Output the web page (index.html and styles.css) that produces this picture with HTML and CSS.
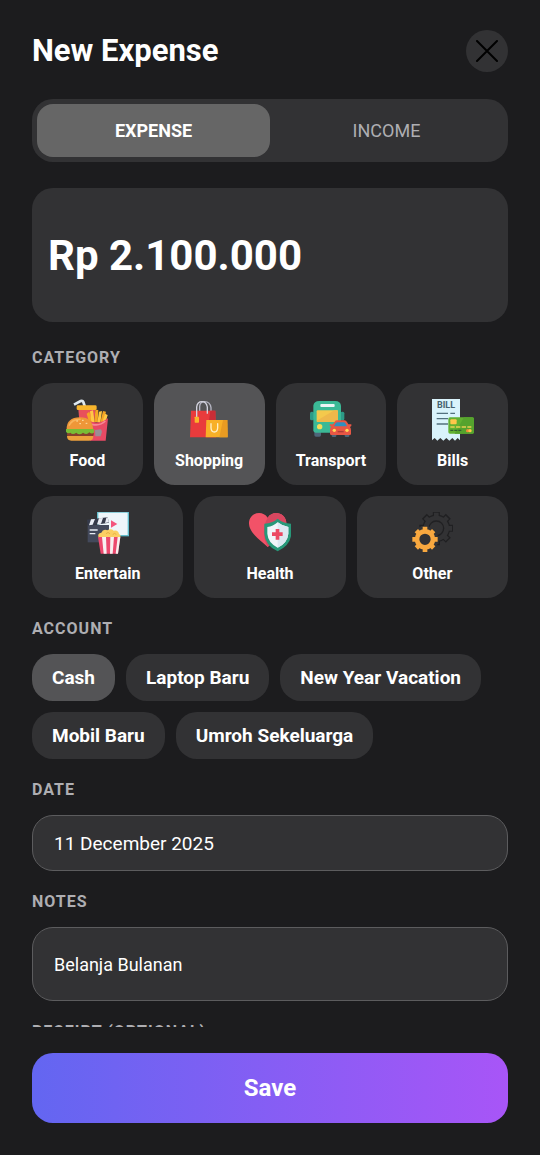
FILE: index.html
```html
<!DOCTYPE html>
<html lang="en">
<head>
  <meta charset="UTF-8" />
  <meta name="viewport" content="width=device-width, initial-scale=1.0"/>
  <title>New Expense</title>
  <link rel="stylesheet" href="styles.css">
</head>
<body>
  <form class="screen">
    <header class="header">
      <h1>New Expense</h1>
      <button type="button" class="close-btn" aria-label="Close">
        <svg width="22" height="22" viewBox="0 0 22 22" fill="none" stroke="#000" stroke-width="2" stroke-linecap="round">
          <path d="M1 1 L21 21 M21 1 L1 21"/>
        </svg>
      </button>
    </header>

    <main class="content">
      <!-- Expense / Income switch -->
      <div class="tabs">
        <button type="button" class="tab active">EXPENSE</button>
        <button type="button" class="tab">INCOME</button>
      </div>

      <input type="text" class="amount" value="Rp 2.100.000" aria-label="Amount" />

      <!-- Category -->
      <section>
        <h2 class="label">CATEGORY</h2>
        <div class="categories">
          <button type="button" class="category">
            <svg class="icon" viewBox="0 0 126 126">
              <path d="M24 17 L44 6 Q50 4 52 9 L57 24" fill="none" stroke="#dfe9f0" stroke-width="8"/>
              <path d="M37 30 H88 L84 90 H42 Z" fill="#e8505b"/>
              <rect x="32" y="19" width="60" height="14" rx="4" fill="#f7b52c"/>
              <path d="M62 44 L70 38 L78 66 L70 72 Z" fill="#f5a623"/>
              <path d="M72 37 L81 34 L86 70 L76 70 Z" fill="#ffc845"/>
              <path d="M88 32 L97 33 L95 70 L85 70 Z" fill="#f5a623"/>
              <path d="M99 38 L108 36 L103 72 L94 70 Z" fill="#ffc845"/>
              <path d="M111 36 L120 38 L112 72 L103 70 Z" fill="#f5a623"/>
              <path d="M117 44 L125 48 L118 72 L109 70 Z" fill="#ffc845"/>
              <path d="M66 64 Q96 80 126 58 L119 125 H72 Z" fill="#e84a64"/>
              <path d="M78 76 Q102 82 118 66" fill="none" stroke="#f58a96" stroke-width="5"/>
              <path d="M87 93 L105 91 L108 98 L104 112 L88 112 Z" fill="#9a8d95"/>
              <path d="M2 91 Q1 56 42 55 Q81 56 81 91 Z" fill="#ee9738"/>
              <path d="M10 78 Q18 61 42 61" fill="none" stroke="#f9b45a" stroke-width="5" stroke-linecap="round"/>
              <path d="M31 66 h5 M48 64 h5 M40 74 h5 M59 73 h5" stroke="#ffe0a6" stroke-width="3"/>
              <rect x="3" y="98" width="80" height="14" rx="5" fill="#87402c"/>
              <path d="M0 90 H84 L85 99 Q78 108 70 100 Q62 110 51 101 Q40 110 31 101 Q20 109 13 101 Q5 106 0 98 Z" fill="#79bd35"/>
              <path d="M3 111 H82 Q82 125 70 125 H16 Q3 125 3 111 Z" fill="#eda03c"/>
            </svg>
            Food
          </button>
          <button type="button" class="category active">
            <svg class="icon" viewBox="0 0 126 126">
              <path d="M35 45 V22 Q36 8 50 8 Q66 8 69 26 V45" fill="none" stroke="#b5b5c2" stroke-width="4"/>
              <path d="M9 35 H82 L84 115 H6 Z" fill="#e93b3c"/>
              <path d="M67 35 H82 L84 115 H56 Z" fill="#c92d36"/>
              <path d="M26 54 V24 Q28 8 42 8 Q55 8 58 24 V44" fill="none" stroke="#d4d4df" stroke-width="4"/>
              <rect x="20" y="53" width="13" height="18" rx="2" fill="#fbb52b"/>
              <path d="M55 63 H118 L119 115 H53 Z" fill="#f8b026"/>
              <path d="M105 63 H118 L119 115 H94 Z" fill="#e89b22"/>
              <path d="M69 74 V87 Q70 99 79 99 Q88 99 89 87 V74" fill="none" stroke="#fff0c6" stroke-width="4" stroke-linecap="round"/>
            </svg>
            Shopping
          </button>
          <button type="button" class="category">
            <svg class="icon" viewBox="0 0 126 126">
              <rect x="0" y="38" width="12" height="26" rx="5" fill="#2d9a87"/>
              <rect x="91" y="38" width="12" height="26" rx="5" fill="#2d9a87"/>
              <rect x="13" y="92" width="20" height="21" rx="5" fill="#4e667a"/>
              <path d="M10 20 Q12 6 28 6 H76 Q91 6 93 20 V94 Q93 101 86 101 H17 Q10 101 10 94 Z" fill="#3bb996"/>
              <rect x="31" y="15" width="43" height="9" rx="3" fill="#eef5f5"/>
              <rect x="20" y="34" width="64" height="35" rx="3" fill="#f4c94c"/>
              <path d="M20 65 L73 34 H81 Q84 34 84 38 V69 H24 Q20 69 20 65 Z" fill="#eeb84b"/>
              <circle cx="29" cy="83" r="8" fill="#f8dc58"/>
              <rect x="65" y="97" width="14" height="17" rx="4" fill="#4e667a"/>
              <rect x="104" y="97" width="14" height="17" rx="4" fill="#4e667a"/>
              <path d="M59 76 h10 L74 68 Q76 64 82 64 H103 Q109 64 111 69 L115 76 H124 V81 L120 84 Q123 88 123 94 V105 Q123 108 119 108 H64 Q60 108 60 104 V91 Q60 86 64 83 L59 80 Z" fill="#e85745"/>
              <path d="M72 82 L77 73 Q79 70 83 70 H101 Q105 70 107 74 L111 82 Z" fill="#308fc0"/>
              <circle cx="73" cy="94" r="5" fill="#ffda58"/>
              <circle cx="111" cy="94" r="5" fill="#ffda58"/>
              <path d="M83 98 H101" stroke="#ae3e38" stroke-width="4"/>
            </svg>
            Transport
          </button>
          <button type="button" class="category">
            <svg class="icon" viewBox="0 0 126 126">
              <path d="M0 0 H84 V124 L77 117 L69 125 L61 117 L52 125 L43 117 L34 125 L25 117 L16 125 L8 117 L0 124 Z" fill="#d9f3fb"/>
              <text x="42" y="27" text-anchor="middle" class="bill-text">BILL</text>
              <path d="M14 43 H48 M55 43 H69 M14 59 H48 M14 75 H48" stroke="#53717e" stroke-width="4"/>
              <path d="M54 55 H121 Q126 55 126 60 V99 Q126 104 121 104 H54 Q49 104 49 99 V60 Q49 55 54 55 Z" fill="#62b132"/>
              <path d="M96 55 H121 Q126 55 126 60 V99 Q126 104 121 104 H68 Z" fill="#55a32d"/>
              <rect x="55" y="61" width="19" height="15" rx="3" fill="#ffc64a"/>
              <path d="M55 84 h13 M72 84 h13 M89 84 h13 M106 84 h12" stroke="#e9d052" stroke-width="4"/>
              <path d="M55 94 h9 M67 94 h9 M79 94 h9" stroke="#315f31" stroke-width="4"/>
              <circle cx="107" cy="95" r="5" fill="#f08c39"/>
              <circle cx="114" cy="95" r="5" fill="#ffc64a"/>
            </svg>
            Bills
          </button>
          <button type="button" class="category">
            <svg class="icon" viewBox="0 0 126 126">
              <rect x="32" y="0" width="92" height="71" fill="#eef6fa" stroke="#62bdcc" stroke-width="4"/>
              <path d="M72 25 L91 36 L72 47 Z" fill="#f4557c"/>
              <path d="M2 39 H66 V91 H2 Z" fill="#43495b"/>
              <path d="M0 23 L62 16 L66 32 L2 42 Z" fill="#353a4a"/>
              <path d="M12 22 L24 21 L17 38 L6 40 Z M36 19 L48 18 L42 35 L30 37 Z M58 17 L62 16 L66 31 L54 33 Z" fill="#e9edf5"/>
              <path d="M8 54 H32 M8 65 H25" stroke="#e9edf5" stroke-width="4"/>
              <path d="M35 77 Q30 64 43 62 Q48 50 61 55 Q72 48 80 56 Q94 53 96 66 Q104 69 98 79 Z" fill="#fbcf63"/>
              <path d="M57 65 Q63 58 69 65 M77 68 Q82 61 88 67" fill="none" stroke="#e8b044" stroke-width="3"/>
              <path d="M33 75 H100 L93 125 H41 Z" fill="#ec496e"/>
              <path d="M45 75 H57 L59 125 H50 Z M70 75 H81 L77 125 H69 Z M92 75 H100 L93 125 H86 Z" fill="#f8f0f1"/>
            </svg>
            Entertain
          </button>
          <button type="button" class="category">
            <svg class="icon" viewBox="0 0 126 126">
              <path d="M56 105 C38 88 0 64 0 34 C0 2 40 -8 56 17 C72 -8 112 2 112 34 C112 64 74 88 56 105 Z" fill="#f25268"/>
              <path d="M56 17 C72 -8 112 2 112 34 C112 64 74 88 56 105 C40 76 42 40 56 17 Z" fill="#d94760"/>
              <path d="M86 20 Q102 34 127 35 V65 Q125 100 86 118 Q48 100 46 65 V35 Q70 34 86 20 Z" fill="#289879"/>
              <path d="M86 31 Q101 43 118 45 V65 Q116 92 86 107 Q57 92 55 65 V45 Q72 43 86 31 Z" fill="#f1f5f9"/>
              <path d="M86 31 Q101 43 118 45 V65 Q116 92 86 107 Z" fill="#dce8f1"/>
              <path d="M80 51 H91 V61 H101 V72 H91 V83 H80 V72 H69 V61 H80 Z" fill="#ec4862"/>
            </svg>
            Health
          </button>
          <button type="button" class="category">
            <svg class="icon" viewBox="0 0 126 126">
              <!-- back gear: dark shape with a slightly smaller card coloured one over it -->
              <g stroke="#202022" stroke-width="21" fill="#202022">
                <path d="M76 -2 V100 M25 49 H127 M40 13 L112 85 M112 13 L40 85"/>
                <circle cx="76" cy="49" r="31"/>
              </g>
              <g stroke="#323234" stroke-width="14" fill="#323234">
                <path d="M76 2 V96 M29 49 H123 M43 16 L109 82 M109 16 L43 82"/>
                <circle cx="76" cy="49" r="31"/>
              </g>
              <circle cx="76" cy="49" r="22" fill="none" stroke="#202022" stroke-width="4"/>
              <circle cx="42" cy="82" r="40" fill="#323234"/>
              <g stroke="#f8a83f" stroke-width="14" stroke-linejoin="round">
                <path d="M42 44 V62 M42 102 V120 M4 82 H22 M62 82 H80 M16 56 L28 68 M56 96 L68 108 M68 56 L56 68 M28 96 L16 108"/>
                <circle cx="42" cy="82" r="24" fill="none"/>
              </g>
            </svg>
            Other
          </button>
        </div>
      </section>

      <!-- Account -->
      <section>
        <h2 class="label">ACCOUNT</h2>
        <div class="chips">
          <button type="button" class="chip active">Cash</button>
          <button type="button" class="chip">Laptop Baru</button>
          <button type="button" class="chip">New Year Vacation</button>
          <button type="button" class="chip">Mobil Baru</button>
          <button type="button" class="chip">Umroh Sekeluarga</button>
        </div>
      </section>

      <section>
        <label class="label" for="date">DATE</label>
        <input type="text" id="date" class="field" value="11 December 2025" />
      </section>

      <section>
        <label class="label" for="notes">NOTES</label>
        <input type="text" id="notes" class="field notes" value="Belanja Bulanan" />
      </section>

      <section>
        <h2 class="label">RECEIPT (OPTIONAL)</h2>
      </section>
    </main>

    <footer class="footer">
      <button type="submit" class="save-btn">Save</button>
    </footer>
  </form>
</body>
</html>
```
FILE: styles.css
```css
* {
  box-sizing: border-box;
}

body {
  margin: 0;
  font-family: Roboto, "Liberation Sans", sans-serif;
  background: #1c1c1e;
  color: white;
}

button, input {
  font-family: inherit;
  color: inherit;
  border: none;
}

button {
  padding: 0;
  cursor: pointer;
}

.screen {
  display: flex;
  flex-direction: column;
  height: 100vh;
}

.header {
  display: flex;
  justify-content: space-between;
  align-items: center;
  padding: 30px 32px 27px;
}

h1 {
  margin: 0;
  font-size: 31px;
  line-height: 42px;
  font-weight: 700;
}

.close-btn {
  display: flex;
  align-items: center;
  justify-content: center;
  width: 42px;
  height: 42px;
  border-radius: 50%;
  background: #323234;
}

.content {
  flex: 1;
  min-height: 0;
  padding: 0 32px;
  overflow-y: auto;
  scrollbar-width: none;
}

.tabs {
  display: flex;
  padding: 5px;
  margin-bottom: 26px;
  border-radius: 21px;
  background: #323234;
}

.tab {
  flex: 1;
  height: 53px;
  border-radius: 16px;
  background: none;
  color: #aeaeb2;
  font-size: 18px;
}

.tab.active {
  background: #666666;
  color: white;
  font-weight: 700;
}

.amount {
  display: block;
  width: 100%;
  height: 134px;
  padding: 0 16px;
  margin-bottom: 25px;
  border-radius: 21px;
  background: #323234;
  font-size: 42px;
  font-weight: 700;
}

section {
  margin-bottom: 20px;
}

.label {
  display: block;
  margin: 0 0 14px;
  color: #aeaeb2;
  font-size: 16px;
  line-height: 22px;
  font-weight: 700;
  letter-spacing: 1px;
}

.categories {
  display: flex;
  flex-wrap: wrap;
  gap: 11px;
}

.category {
  display: flex;
  flex: 1 1 100px;
  flex-direction: column;
  align-items: center;
  gap: 9px;
  padding: 16px 0 13px;
  border-radius: 21px;
  background: #323234;
  font-size: 16px;
  line-height: 22px;
  font-weight: 700;
}

.icon {
  width: 42px;
  height: 42px;
}

.bill-text {
  font-size: 27px;
  font-weight: 700;
  fill: #46616e;
}

.chips {
  display: flex;
  flex-wrap: wrap;
  gap: 11px;
}

.chip {
  height: 47px;
  padding: 0 20px;
  border-radius: 21px;
  background: #323234;
  font-size: 19px;
  font-weight: 700;
}

.category.active,
.chip.active {
  background: #545456;
}

.field {
  display: block;
  width: 100%;
  height: 56px;
  padding: 0 21px;
  border: 1px solid #5c5c5e;
  border-radius: 21px;
  background: #323234;
  font-size: 19px;
}

.notes {
  height: 74px;
  font-size: 18px;
}

.footer {
  padding: 26px 32px 32px;
}

.save-btn {
  width: 100%;
  height: 70px;
  border-radius: 21px;
  background: linear-gradient(90deg, #6366f1, #a855f7);
  font-size: 24px;
  font-weight: 700;
}
```
